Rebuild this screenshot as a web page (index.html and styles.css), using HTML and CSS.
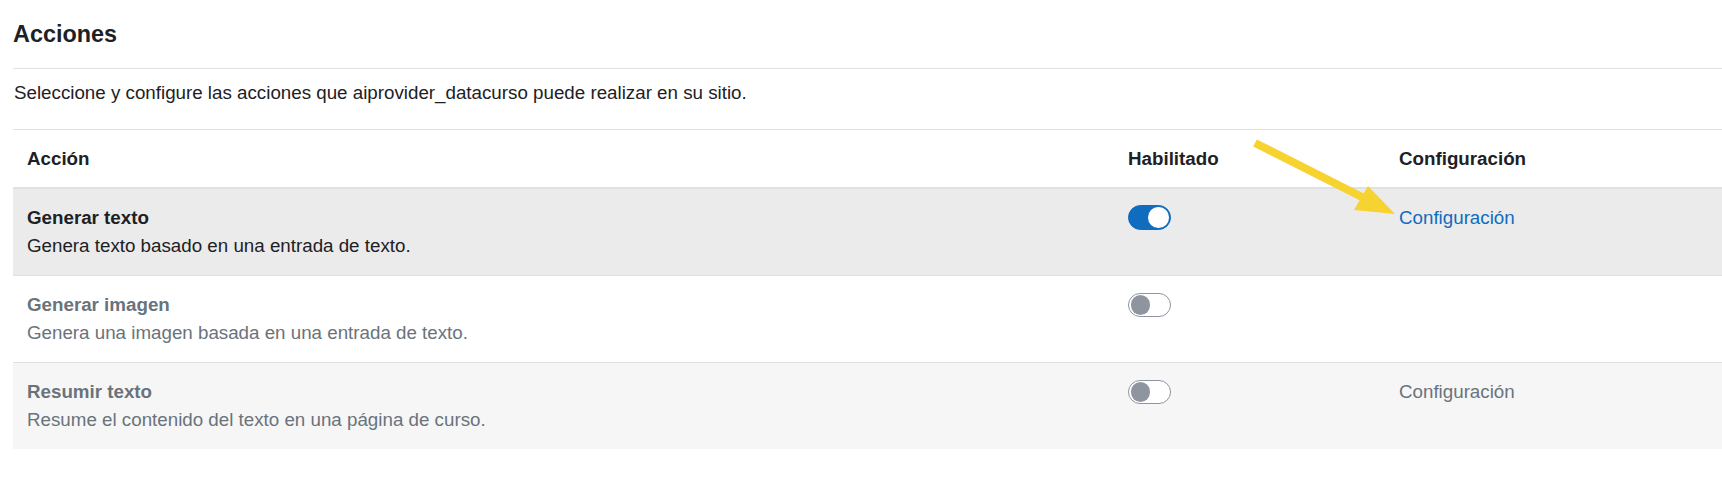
FILE: index.html
```html
<!DOCTYPE html>
<html lang="es">
<head>
<meta charset="utf-8">
<title>Acciones</title>
<link rel="stylesheet" href="styles.css">
</head>
<body>
<div class="page">
  <div class="page-header">
    <h3 class="title">Acciones</h3>
  </div>
  <p class="intro">Seleccione y configure las acciones que aiprovider_datacurso puede realizar en su sitio.</p>
  <table class="actions">
    <colgroup>
      <col class="col-action">
      <col class="col-enabled">
      <col class="col-config">
    </colgroup>
    <thead>
      <tr>
        <th>Acción</th>
        <th>Habilitado</th>
        <th>Configuración</th>
      </tr>
    </thead>
    <tbody>
      <tr class="row row-hover">
        <td>
          <div class="action-name">Generar texto</div>
          <div class="action-desc">Genera texto basado en una entrada de texto.</div>
        </td>
        <td><div class="switch-wrap"><span class="switch switch-on"><span class="knob"></span></span></div></td>
        <td><a class="config-link" href="#">Configuración</a></td>
      </tr>
      <tr class="row row-disabled">
        <td>
          <div class="action-name">Generar imagen</div>
          <div class="action-desc">Genera una imagen basada en una entrada de texto.</div>
        </td>
        <td><div class="switch-wrap"><span class="switch switch-off"><span class="knob"></span></span></div></td>
        <td></td>
      </tr>
      <tr class="row row-disabled row-striped">
        <td>
          <div class="action-name">Resumir texto</div>
          <div class="action-desc">Resume el contenido del texto en una página de curso.</div>
        </td>
        <td><div class="switch-wrap"><span class="switch switch-off"><span class="knob"></span></span></div></td>
        <td><span class="config-muted">Configuración</span></td>
      </tr>
    </tbody>
  </table>
  <svg class="arrow" width="170" height="100" viewBox="0 0 170 100" aria-hidden="true">
    <line x1="15" y1="13" x2="122" y2="67" stroke="#f6d330" stroke-width="8" stroke-linecap="butt"/>
    <polygon points="128,56 114,80 155,84" fill="#f6d330"/>
  </svg>
</div>
</body>
</html>
```

FILE: styles.css
```css
html, body {
  margin: 0;
  padding: 0;
  background: #ffffff;
}

body {
  font-family: "Liberation Sans", Arial, sans-serif;
  font-size: 18.75px;
  line-height: 1.5;
  color: #1d2125;
}

.page {
  position: relative;
  padding-left: 13px;
}

.page-header {
  border-bottom: 1px solid #dee2e6;
  padding-top: 19.5px;
  padding-bottom: 20.5px;
}

.title {
  margin: 0;
  font-size: 23.4px;
  line-height: 1.2;
  font-weight: bold;
  color: #1d2125;
}

.intro {
  margin: 9.5px 0 21.8px 1px;
}

.actions {
  width: 100%;
  border-collapse: collapse;
  table-layout: fixed;
}

.col-action { width: 1101px; }
.col-enabled { width: 271px; }

.actions th {
  text-align: left;
  font-weight: bold;
  padding: 15px 14px 14px 14px;
  border-top: 1px solid #dee2e6;
  border-bottom: 2px solid #dee2e6;
  vertical-align: top;
}

.actions td {
  padding: 15px 14px 15px 14px;
  border-top: 1px solid #dee2e6;
  vertical-align: top;
}

.row-hover td {
  background: #ebebeb;
}

.row-striped td {
  background: #f6f6f6;
}

.action-name {
  font-weight: bold;
}

.row-disabled {
  color: #6a737b;
}

.switch-wrap {
  height: 28px;
  display: flex;
  align-items: center;
}

.switch {
  box-sizing: border-box;
  width: 43px;
  height: 24.5px;
  border-radius: 13px;
  display: flex;
  align-items: center;
  padding: 0 1.5px;
}

.switch-on {
  background: #0f6cbf;
  border: 1px solid #0f6cbf;
  justify-content: flex-end;
}

.switch-on .knob {
  width: 20.5px;
  height: 20.5px;
  border-radius: 50%;
  background: #ffffff;
}

.switch-off {
  background: #ffffff;
  border: 1px solid #8f959e;
  justify-content: flex-start;
}

.switch-off .knob {
  width: 19.5px;
  height: 19.5px;
  border-radius: 50%;
  background: #8f959e;
}

.config-link {
  color: #0f6cbf;
  text-decoration: none;
}

.config-muted {
  color: #6a737b;
}

.arrow {
  position: absolute;
  left: 1240px;
  top: 130px;
}
```
